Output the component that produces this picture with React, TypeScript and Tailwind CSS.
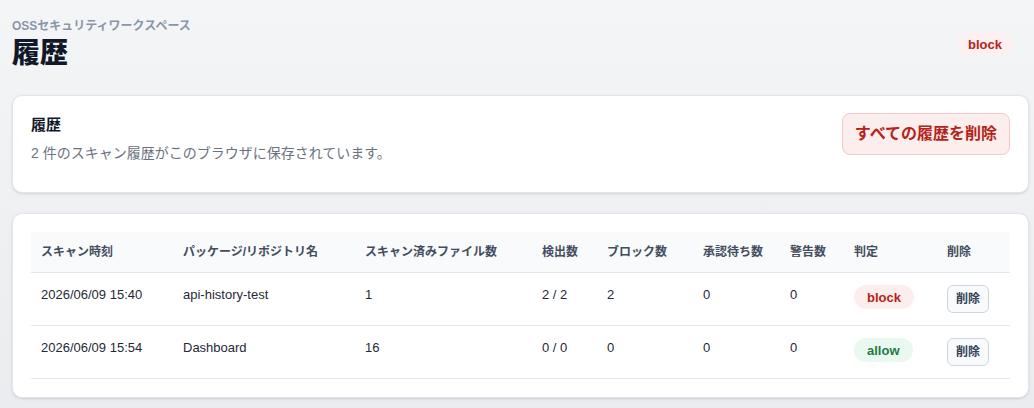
import React from "react";

type Verdict = "block" | "allow";

interface HistoryRow {
  scannedAt: string;
  name: string;
  files: number;
  detected: string;
  blocked: number;
  pending: number;
  warnings: number;
  verdict: Verdict;
}

const rows: HistoryRow[] = [
  {
    scannedAt: "2026/06/09 15:40",
    name: "api-history-test",
    files: 1,
    detected: "2 / 2",
    blocked: 2,
    pending: 0,
    warnings: 0,
    verdict: "block",
  },
  {
    scannedAt: "2026/06/09 15:54",
    name: "Dashboard",
    files: 16,
    detected: "0 / 0",
    blocked: 0,
    pending: 0,
    warnings: 0,
    verdict: "allow",
  },
];

const columns = [
  { label: "スキャン時刻", width: "w-[142px]" },
  { label: "パッケージ/リポジトリ名", width: "w-[182px]" },
  { label: "スキャン済みファイル数", width: "w-[177px]" },
  { label: "検出数", width: "w-[65px]" },
  { label: "ブロック数", width: "w-[96px]" },
  { label: "承認待ち数", width: "w-[87px]" },
  { label: "警告数", width: "w-[64px]" },
  { label: "判定", width: "w-[93px]" },
  { label: "削除", width: "w-[73px]" },
];

function VerdictBadge({ verdict }: { verdict: Verdict }) {
  const styles =
    verdict === "block"
      ? "bg-[#fdeeee] text-[#b42318]"
      : "bg-[#e9f9ef] text-[#1f7a45]";
  return (
    <span
      className={`inline-flex h-6 items-center rounded-full px-[13px] text-[13px] font-bold leading-none ${styles}`}
    >
      {verdict}
    </span>
  );
}

export default function App() {
  return (
    <div
      className="min-h-[408px] bg-gradient-to-b from-[#f4f5f7] to-[#eaecef] pb-3 pl-3 pr-[5px] pt-[18px] text-[#1f2937]"
      style={{ fontFamily: '"Liberation Sans", "Noto Sans CJK JP", sans-serif' }}
    >
      <header className="flex items-start justify-between pr-[16px]">
        <div>
          <p className="text-[12px] font-bold leading-[16px] text-[#8a95a8]">
            OSSセキュリティワークスペース
          </p>
          <h1 className="mt-[3px] text-[28px] font-extrabold leading-[34px] text-[#111827]">
            履歴
          </h1>
        </div>
        <span className="mt-[14px] inline-flex h-6 items-center rounded-full bg-[#fdf0f0] px-[11px] text-[13px] font-bold leading-none text-[#b42318]">
          block
        </span>
      </header>

      <section className="mt-[24px] flex h-[98px] items-start justify-between rounded-[10px] border border-[#e2e5ea] bg-white px-[18px] py-[17px] shadow-sm">
        <div className="pt-[2px]">
          <h2 className="text-[15px] font-bold leading-[20px] text-[#111827]">履歴</h2>
          <p className="mt-[8px] text-[14px] leading-[20px] text-[#6b7280]">
            2 件のスキャン履歴がこのブラウザに保存されています。
          </p>
        </div>
        <button className="h-[42px] rounded-[8px] border border-[#f5c9c9] bg-[#fdeeee] px-[12px] text-[16px] font-bold text-[#b42318]">
          すべての履歴を削除
        </button>
      </section>

      <section className="mt-[20px] rounded-[10px] border border-[#e2e5ea] bg-white px-[18px] py-[18px] shadow-sm">
        <table className="w-full table-fixed border-collapse text-left">
          <thead>
            <tr className="h-[40px] border-b border-[#e5e7eb] bg-[#f8fafc]">
              {columns.map((c) => (
                <th
                  key={c.label}
                  className={`${c.width} px-[10px] text-[12px] font-bold text-[#434d5c]`}
                >
                  {c.label}
                </th>
              ))}
            </tr>
          </thead>
          <tbody>
            {rows.map((r) => (
              <tr key={r.scannedAt} className="border-b border-[#e5e7eb] align-top">
                <td className="px-[10px] py-3 text-[13px] leading-[20px]">{r.scannedAt}</td>
                <td className="px-[10px] py-3 text-[13px] leading-[20px]">{r.name}</td>
                <td className="px-[10px] py-3 text-[13px] leading-[20px]">{r.files}</td>
                <td className="px-[10px] py-3 text-[13px] leading-[20px]">{r.detected}</td>
                <td className="px-[10px] py-3 text-[13px] leading-[20px]">{r.blocked}</td>
                <td className="px-[10px] py-3 text-[13px] leading-[20px]">{r.pending}</td>
                <td className="px-[10px] py-3 text-[13px] leading-[20px]">{r.warnings}</td>
                <td className="px-[10px] py-3">
                  <VerdictBadge verdict={r.verdict} />
                </td>
                <td className="px-[10px] py-3">
                  <button className="h-[28px] rounded-[6px] border border-[#cbd5e1] bg-[#f8fafc] px-2 text-[12px] font-bold text-[#334155]">
                    削除
                  </button>
                </td>
              </tr>
            ))}
          </tbody>
        </table>
      </section>
    </div>
  );
}
